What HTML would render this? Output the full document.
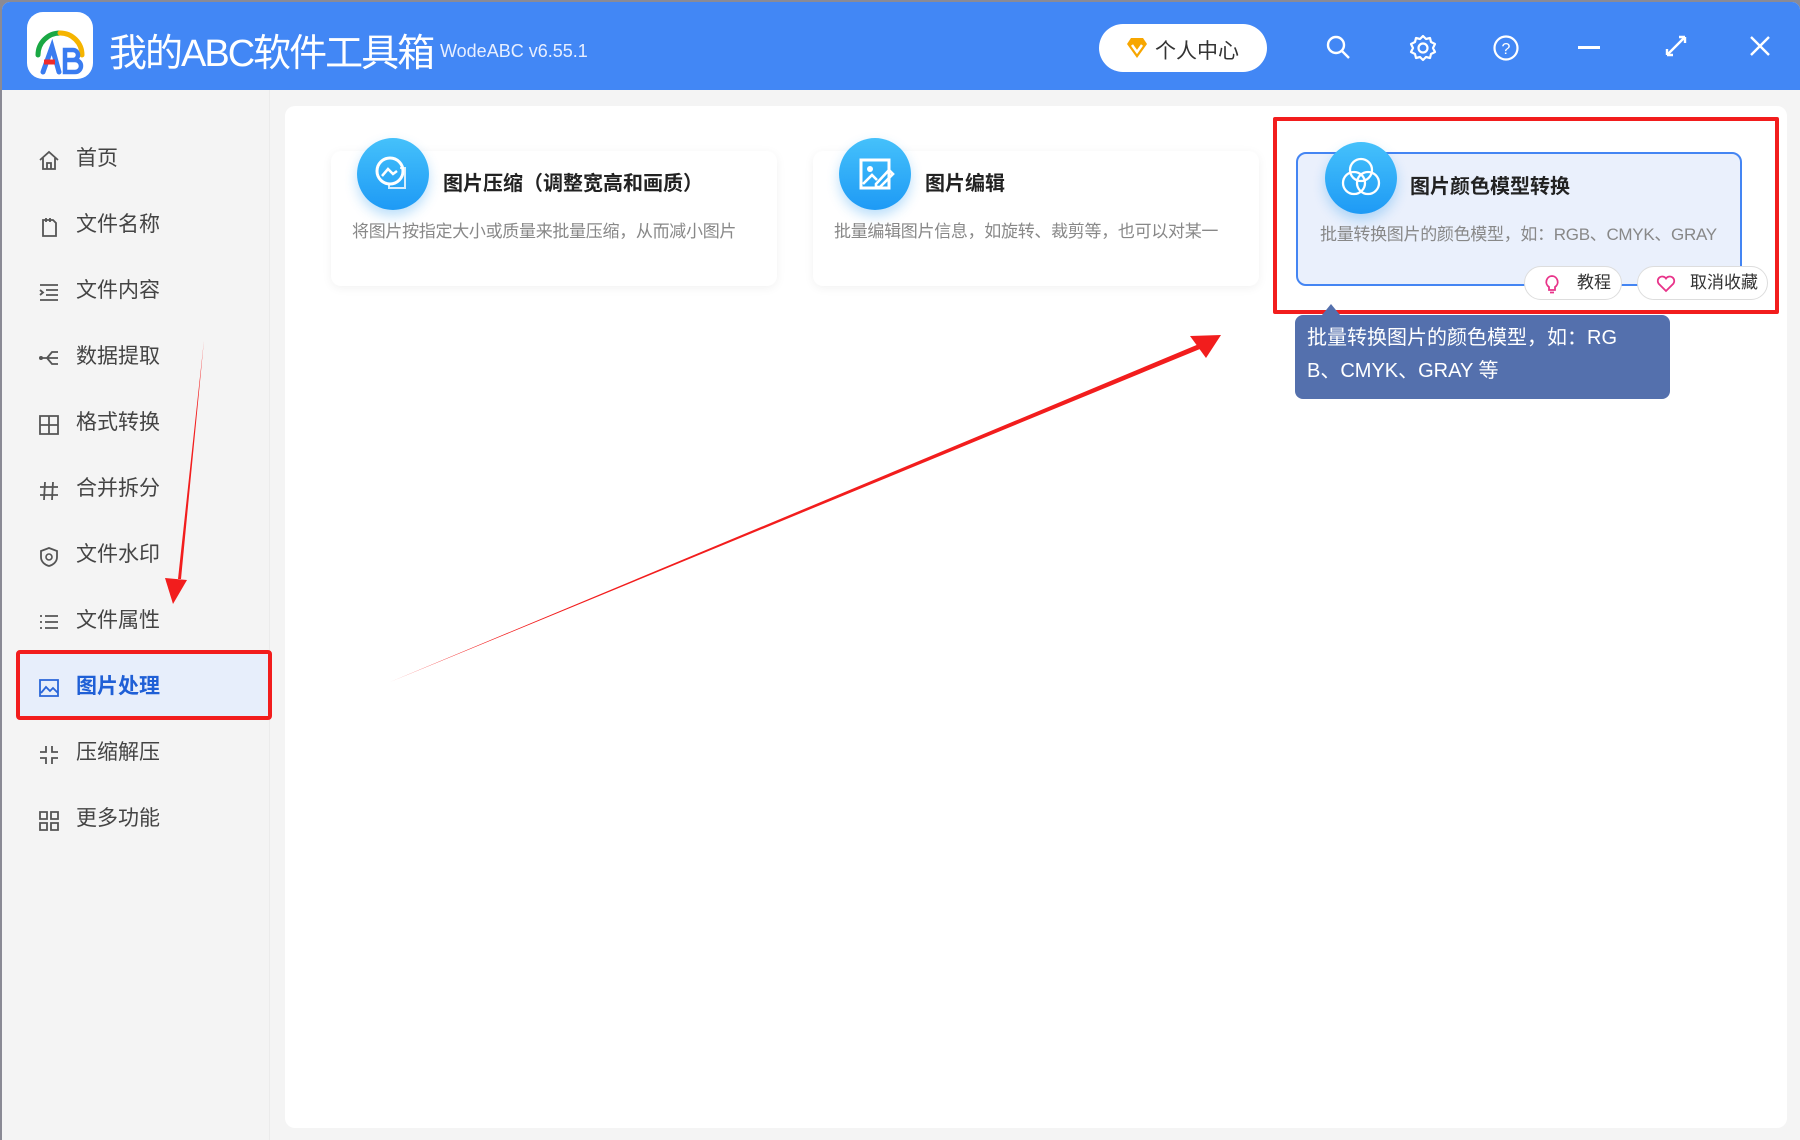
<!DOCTYPE html>
<html><head><meta charset="utf-8"><style>
*{margin:0;padding:0;box-sizing:border-box}
body{width:1800px;height:1140px;background:#8a8a95;font-family:"Liberation Sans","Noto Sans CJK SC",sans-serif;overflow:hidden;position:relative}
.win{position:absolute;left:2px;top:2px;width:1798px;height:1138px;background:#f4f4f4;border-radius:8px 8px 0 0;overflow:hidden}
.hdr{position:absolute;left:0;top:0;width:100%;height:88px;background:#4287f5}
.logo{position:absolute;left:25px;top:10px;width:66px;height:67px;background:#fff;border-radius:16px}
.title{position:absolute;left:107px;top:20px;color:#fff;font-size:38px;letter-spacing:-2px}
.ver{position:absolute;left:438px;top:39px;color:#e8efff;font-size:18px}
.pill{position:absolute;left:1097px;top:22px;width:168px;height:48px;background:#fff;border-radius:24px;font-size:21px;color:#333;padding:11px 0 0 56px}
.ic{position:absolute;top:32px}
.side{position:absolute;left:0;top:88px;width:268px;height:1050px;border-right:1px solid #ebebeb}
.it{position:absolute;left:36px;font-size:21px;color:#444;height:30px;line-height:30px}
.it svg{position:absolute;left:0;top:6px}
.it span{position:absolute;left:38px;white-space:nowrap}
.sel{position:absolute;left:14px;top:648px;width:256px;height:70px;background:#e7eefb;border:4px solid #f21d1d;border-radius:4px}
.main{position:absolute;left:283px;top:104px;width:1502px;height:1022px;background:#fff;border-radius:10px}
.card{position:absolute;top:149px;width:446px;height:135px;background:#fff;border-radius:10px;box-shadow:0 2px 10px rgba(0,0,0,.06)}
.circ{position:absolute;width:72px;height:72px;border-radius:50%;background:linear-gradient(#45c1fb,#1e9af5);box-shadow:0 6px 12px rgba(30,150,240,.3)}
.ct{position:absolute;font-size:20px;font-weight:bold;color:#222;white-space:nowrap}
.cd{position:absolute;font-size:17px;color:#888;white-space:nowrap;overflow:hidden;letter-spacing:-0.3px}
.btn{position:absolute;top:264px;height:34px;background:#fff;border:1px solid #ddd;border-radius:17px;font-size:17px;color:#333;line-height:32px}
.tip{position:absolute;left:1293px;top:313px;width:375px;height:84px;background:#5470ad;border-radius:8px;color:#fff;font-size:20px;line-height:33px;padding:7px 12px}
</style></head><body>
<div class="win">
<div class="hdr">
 <div class="logo"><svg width="66" height="67" viewBox="0 0 66 67">
  <path d="M11 43 A22 22 0 0 1 33 21" stroke="#1aa844" stroke-width="5" fill="none" stroke-linecap="round"/>
  <path d="M33 21 A22 22 0 0 1 55 43" stroke="#f5b400" stroke-width="5" fill="none" stroke-linecap="round"/>
  <path d="M16 60 L25 35 L32 60" stroke="#3a7cf0" stroke-width="5" fill="none" stroke-linecap="round"/>
  <path d="M17 50 H28" stroke="#ef2b2b" stroke-width="5"/>
  <path d="M38 38 H46 A5 5 0 0 1 46 48 H38 Z M38 48 H48 A6 6 0 0 1 48 60 H38 Z" stroke="#3a7cf0" stroke-width="4.5" fill="none"/>
 </svg></div>
 <div class="title">我的ABC软件工具箱</div>
 <div class="ver">WodeABC v6.55.1</div>
 <div class="pill"><svg style="position:absolute;left:26px;top:13px" width="24" height="22" viewBox="0 0 24 22"><path d="M2 7 L6 1 H18 L22 7 L12 21 Z" fill="#f7a600"/><path d="M7 8 L12 15 L17 8" stroke="#fff" stroke-width="2.5" fill="none"/></svg>个人中心</div>
 <svg class="ic" style="left:1323px" width="26" height="26" viewBox="0 0 26 26"><circle cx="11" cy="11" r="8" stroke="#fff" stroke-width="2.4" fill="none"/><path d="M17 17 L24 24" stroke="#fff" stroke-width="2.4"/></svg>
 <svg class="ic" style="left:1407px" width="28" height="28" viewBox="0 0 28 28"><circle cx="14" cy="14" r="4.5" stroke="#fff" stroke-width="2.2" fill="none"/><path d="M14 2 L17 5 L21 4 L22 8 L26 10 L24 14 L26 18 L22 20 L21 24 L17 23 L14 26 L11 23 L7 24 L6 20 L2 18 L4 14 L2 10 L6 8 L7 4 L11 5 Z" stroke="#fff" stroke-width="2.2" fill="none" stroke-linejoin="round"/></svg>
 <svg class="ic" style="left:1490px" width="28" height="28" viewBox="0 0 28 28"><circle cx="14" cy="14" r="11.5" stroke="#fff" stroke-width="2.2" fill="none"/><text x="14" y="20" fill="#fff" font-size="16" text-anchor="middle" font-family="Liberation Sans">?</text></svg>
 <div style="position:absolute;left:1576px;top:44px;width:22px;height:2.5px;background:#fff"></div>
 <svg class="ic" style="left:1662px" width="24" height="24" viewBox="0 0 24 24"><path d="M3 21 L21 3 M3 21 V15 M3 21 H9 M21 3 H15 M21 3 V9" stroke="#fff" stroke-width="2.4" fill="none"/></svg>
 <svg class="ic" style="left:1746px" width="24" height="24" viewBox="0 0 24 24"><path d="M3 3 L21 21 M21 3 L3 21" stroke="#fff" stroke-width="2.4"/></svg>
</div>
<div class="side"></div>
<div class="sel"></div>
<div class="it" style="top:142px"><svg width="22" height="20" viewBox="0 0 22 20"><path d="M2 10 L11 2 L20 10 M5 8 V19 H17 V8 M9 19 V13 H13 V19" stroke="#555" stroke-width="1.8" fill="none"/></svg><span>首页</span></div>
<div class="it" style="top:208px"><svg width="22" height="22" viewBox="0 0 22 22"><path d="M5 4 H15 L18 7 V20 H5 Z M8 2 V6 M12 2 V6" stroke="#555" stroke-width="1.8" fill="none"/></svg><span>文件名称</span></div>
<div class="it" style="top:274px"><svg width="22" height="20" viewBox="0 0 22 20"><path d="M2 3 H20 M8 8 H20 M8 13 H20 M2 18 H20 M2 8 L5 10.5 L2 13" stroke="#555" stroke-width="1.8" fill="none"/></svg><span>文件内容</span></div>
<div class="it" style="top:340px"><svg width="22" height="20" viewBox="0 0 22 20"><path d="M2 10 H20 M9 10 L14 4 H20 M9 10 L14 16 H20" stroke="#555" stroke-width="1.8" fill="none"/><circle cx="3" cy="10" r="2" fill="#555"/></svg><span>数据提取</span></div>
<div class="it" style="top:406px"><svg width="22" height="22" viewBox="0 0 22 22"><path d="M2 2 H20 V20 H2 Z M11 2 V20 M2 11 H20" stroke="#555" stroke-width="1.8" fill="none"/></svg><span>格式转换</span></div>
<div class="it" style="top:472px"><svg width="22" height="22" viewBox="0 0 22 22"><path d="M7 2 L6 20 M15 2 L14 20 M2 7 H20 M2 15 H20" stroke="#555" stroke-width="1.8"/></svg><span>合并拆分</span></div>
<div class="it" style="top:538px"><svg width="22" height="22" viewBox="0 0 22 22"><path d="M11 2 L19 5 V11 C19 16 15 19 11 20 C7 19 3 16 3 11 V5 Z" stroke="#555" stroke-width="1.8" fill="none"/><circle cx="11" cy="11" r="3" stroke="#555" stroke-width="1.6" fill="none"/></svg><span>文件水印</span></div>
<div class="it" style="top:604px"><svg width="22" height="20" viewBox="0 0 22 20"><path d="M7 4 H20 M7 10 H20 M7 16 H20 M2 4 H4 M2 10 H4 M2 16 H4" stroke="#555" stroke-width="1.8"/></svg><span>文件属性</span></div>
<div class="it" style="top:670px;color:#1f5fd6;font-weight:bold"><svg width="22" height="20" viewBox="0 0 22 20"><path d="M2 2 H20 V18 H2 Z M3 15 L8 9 L12 13 L15 10 L20 15" stroke="#2a66d9" stroke-width="1.8" fill="none"/></svg><span>图片处理</span></div>
<div class="it" style="top:736px"><svg width="22" height="22" viewBox="0 0 22 22"><path d="M8 2 V8 H2 M14 2 V8 H20 M8 20 V14 H2 M14 20 V14 H20" stroke="#555" stroke-width="1.8" fill="none"/></svg><span>压缩解压</span></div>
<div class="it" style="top:802px"><svg width="22" height="22" viewBox="0 0 22 22"><path d="M2 2 H9 V9 H2 Z M13 2 H20 V9 H13 Z M2 13 H9 V20 H2 Z M13 13 H20 V20 H13 Z" stroke="#555" stroke-width="1.8" fill="none"/></svg><span>更多功能</span></div>

<div class="main"></div>
<div class="card" style="left:329px"></div>
<div class="circ" style="left:355px;top:136px"><svg width="72" height="72" viewBox="0 0 72 72"><circle cx="33" cy="33" r="13" stroke="#fff" stroke-width="3" fill="none"/><path d="M25 38 L31 31 L36 36 L40 33" stroke="#fff" stroke-width="2.5" fill="none"/><path d="M43 30 H48 V50 H32 V46" stroke="#fff" stroke-width="2" fill="none" opacity=".8"/></svg></div>
<div class="ct" style="left:441px;top:165px">图片压缩（调整宽高和画质）</div>
<div class="cd" style="left:350px;top:215px;width:406px">将图片按指定大小或质量来批量压缩，从而减小图片</div>
<div class="card" style="left:811px"></div>
<div class="circ" style="left:837px;top:136px"><svg width="72" height="72" viewBox="0 0 72 72"><path d="M22 22 H50 V50 H22 Z" stroke="#fff" stroke-width="3" fill="none"/><circle cx="31" cy="31" r="3" fill="#fff"/><path d="M24 46 L33 37 L38 42 M37 46 L50 32 L54 36 L41 49 H37 Z" stroke="#fff" stroke-width="2.6" fill="none"/></svg></div>
<div class="ct" style="left:923px;top:165px">图片编辑</div>
<div class="cd" style="left:832px;top:215px;width:406px">批量编辑图片信息，如旋转、裁剪等，也可以对某一</div>

<div style="position:absolute;left:1294px;top:150px;width:446px;height:134px;background:#eaf0fc;border:2.5px solid #4485f3;border-radius:10px"></div>
<div class="circ" style="left:1323px;top:140px"><svg width="72" height="72" viewBox="0 0 72 72"><circle cx="36" cy="28" r="11" stroke="#fff" stroke-width="2.3" fill="none"/><circle cx="29" cy="41" r="11" stroke="#fff" stroke-width="2.3" fill="none"/><circle cx="43" cy="41" r="11" stroke="#fff" stroke-width="2.3" fill="none"/></svg></div>
<div class="ct" style="left:1408px;top:168px">图片颜色模型转换</div>
<div class="cd" style="left:1318px;top:218px;width:398px">批量转换图片的颜色模型，如：RGB、CMYK、GRAY</div>
<div class="btn" style="left:1522px;width:98px;padding-left:52px"><svg style="position:absolute;left:18px;top:7px" width="18" height="20" viewBox="0 0 18 20"><path d="M9 2 A6 6 0 0 1 12 13 V16 H6 V13 A6 6 0 0 1 9 2 Z M7 18.5 H11" stroke="#e8348a" stroke-width="1.8" fill="none"/></svg>教程</div>
<div class="btn" style="left:1635px;width:131px;padding-left:52px"><svg style="position:absolute;left:18px;top:8px" width="20" height="18" viewBox="0 0 20 18"><path d="M10 16 L2.5 8.5 A4.3 4.3 0 0 1 10 3.5 A4.3 4.3 0 0 1 17.5 8.5 Z" stroke="#e8348a" stroke-width="1.8" fill="none"/></svg>取消收藏</div>
<div style="position:absolute;left:1271px;top:115px;width:506px;height:197px;border:4px solid #f21d1d;border-radius:2px"></div>
<div style="position:absolute;left:1320px;top:302px;width:0;height:0;border-left:9px solid transparent;border-right:9px solid transparent;border-bottom:11px solid #5470ad"></div>
<div class="tip">批量转换图片的颜色模型，如：RG<br>B、CMYK、GRAY 等</div>

<svg style="position:absolute;left:0;top:0" width="1800" height="1140">
 <polygon points="388,680 1198,347 1197,342" fill="#f21d1d"/>
 <polygon points="1219,333 1188,334 1204,356" fill="#f21d1d"/>
 <polygon points="202,338 179,577 176,577" fill="#f21d1d"/>
 <polygon points="171,602 163,576 185,578" fill="#f21d1d"/>
</svg>
</div>
</body></html>
